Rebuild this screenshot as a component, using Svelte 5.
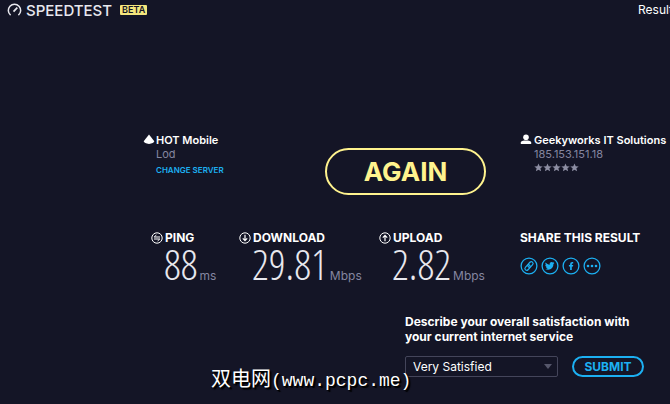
<script>
  const metrics = [
    { id: 'ping', label: 'Ping', value: '88', unit: 'ms' },
    { id: 'download', label: 'Download', value: '29.81', unit: 'Mbps' },
    { id: 'upload', label: 'Upload', value: '2.82', unit: 'Mbps' }
  ];
  const shares = ['link', 'twitter', 'facebook', 'more'];
  const stars = [1, 2, 3, 4, 5];
  const ratings = ['Very Satisfied', 'Satisfied', 'Neutral', 'Dissatisfied', 'Very Dissatisfied'];

  let rating = $state('Very Satisfied');
</script>

<div class="app">
  <header>
    <a class="logo" href="/">
      <svg width="15" height="14" viewBox="0 0 15 14" aria-hidden="true">
        <path d="M3.6 12.2A6.2 6.2 0 1 1 11.4 12.2" fill="none" stroke="currentColor" stroke-width="1.5" />
        <path d="M6.5 8.7L10.3 4.6" stroke="currentColor" stroke-width="1.7" />
      </svg>
      <span>SPEEDTEST</span>
    </a>
    <span class="beta">BETA</span>
    <nav><a href="/results">Results</a></nav>
  </header>

  <main>
    <section class="connection">
      <div class="party">
        <svg width="12" height="11" viewBox="0 0 12 11" aria-hidden="true">
          <path d="M6 0.5L11.3 7.3Q10.7 9.7 6 9.9Q1.3 9.7 0.7 7.3Z" fill="currentColor" />
        </svg>
        <div>
          <strong>HOT Mobile</strong>
          <span class="detail">Lod</span>
          <a class="change" href="/servers">CHANGE SERVER</a>
        </div>
      </div>

      <button class="again" type="button">AGAIN</button>

      <div class="party isp">
        <svg width="12" height="11" viewBox="0 0 12 11" aria-hidden="true">
          <circle cx="6" cy="3.3" r="2.8" fill="currentColor" />
          <path d="M0.8 10V8.6Q0.8 7 4.5 6.5H7.5Q11.2 7 11.2 8.6V10Z" fill="currentColor" />
        </svg>
        <div>
          <strong>Geekyworks IT Solutions</strong>
          <span class="detail">185.153.151.18</span>
          <div class="stars">
            {#each stars as star (star)}
              <svg width="9" height="9" viewBox="0 0 9 9" aria-hidden="true">
                <path d="M4.5 0.4L5.7 3.2L8.7 3.4L6.4 5.3L7.1 8.3L4.5 6.7L1.9 8.3L2.6 5.3L0.3 3.4L3.3 3.2Z" fill="currentColor" />
              </svg>
            {/each}
          </div>
        </div>
      </div>
    </section>

    <section class="results">
      {#each metrics as metric (metric.id)}
        <div class="metric">
          <h2>
            <svg width="12" height="12" viewBox="0 0 12 12" fill="none" stroke="currentColor" aria-hidden="true">
              <circle cx="6" cy="6" r="5.2" />
              {#if metric.id === 'ping'}
                <path d="M9 5H3.2L5.4 3M3 7H8.8L6.6 9" />
              {:else if metric.id === 'download'}
                <path d="M6 2.8V8.6M3.8 6.4L6 8.6L8.2 6.4" stroke-width="1.2" />
              {:else}
                <path d="M6 9.2V3.4M3.8 5.6L6 3.4L8.2 5.6" stroke-width="1.2" />
              {/if}
            </svg>
            {metric.label}
          </h2>
          <p><span class="value">{metric.value}</span><span class="unit">{metric.unit}</span></p>
        </div>
      {/each}

      <div class="share">
        <h2>Share this result</h2>
        <div class="links">
          {#each shares as share (share)}
            <a href="/share/{share}" aria-label={share}>
              <svg width="18" height="18" viewBox="0 0 18 18" aria-hidden="true">
                <circle cx="9" cy="9" r="7.9" fill="none" stroke="currentColor" stroke-width="1.3" />
                {#if share === 'link'}
                  <g transform="rotate(-48 9 9)" fill="none" stroke="currentColor" stroke-width="1.2">
                    <rect x="3.8" y="7.2" width="6.2" height="3.6" rx="1.8" />
                    <rect x="8" y="7.2" width="6.2" height="3.6" rx="1.8" />
                  </g>
                {:else if share === 'twitter'}
                  <path
                    d="M13.4 6.2L12.4 7.1C12.5 10.2 10.2 12.8 7.2 12.8C6 12.8 5 12.5 4.3 12C5.3 12.1 6.2 11.8 6.8 11.3C6 11.2 5.3 10.7 5 9.9L5.8 9.9C4.9 9.6 4.4 8.8 4.3 7.9L5.1 8.1C4.3 7.4 4.2 6.3 4.6 5.6C5.6 6.8 7.1 7.6 8.7 7.7C8.3 6 9.4 5 10.6 5C11.2 5 11.7 5.2 12 5.6L13.2 5.1L12.6 6.1Z"
                    fill="currentColor"
                  />
                {:else if share === 'facebook'}
                  <path d="M8.1 13V9.6H6.9V8H8.1V7Q8.1 4.9 10.2 4.9H11.2V6.4H10.5Q9.8 6.4 9.8 7.1V8H11.2L11 9.6H9.8V13Z" fill="currentColor" />
                {:else}
                  <circle cx="5" cy="9" r="1.3" fill="currentColor" />
                  <circle cx="9" cy="9" r="1.3" fill="currentColor" />
                  <circle cx="13" cy="9" r="1.3" fill="currentColor" />
                {/if}
              </svg>
            </a>
          {/each}
        </div>
      </div>
    </section>

    <form class="survey" onsubmit={(event) => event.preventDefault()}>
      <label for="rating">Describe your overall satisfaction with your current internet service</label>
      <div class="answer">
        <div class="select">
          <select id="rating" bind:value={rating}>
            {#each ratings as option (option)}
              <option>{option}</option>
            {/each}
          </select>
          <svg width="8" height="5" viewBox="0 0 8 5" aria-hidden="true"><path d="M0 0H8L4 5Z" fill="currentColor" /></svg>
        </div>
        <button class="submit" type="submit">SUBMIT</button>
      </div>
    </form>
  </main>

  <div class="watermark">双电网<span>(www.pcpc.me)</span></div>
</div>

<style>
  :global(body) {
    background: #141526;
  }

  .app {
    position: relative;
    min-height: 100vh;
    overflow: hidden;
    box-sizing: border-box;
    background: #141526;
    color: #fff;
    font-family: Inter, 'Liberation Sans', sans-serif;
    font-size: 12px;
  }

  h2,
  p {
    margin: 0;
  }

  a {
    color: inherit;
    text-decoration: none;
  }

  svg {
    display: block;
    flex: none;
  }

  button,
  select {
    font-family: inherit;
    cursor: pointer;
  }

  header {
    display: flex;
    align-items: center;
    height: 20px;
    padding-left: 7px;
  }

  .logo {
    display: flex;
    align-items: center;
    gap: 4px;
    color: #e8e8ee;
    font-size: 15px;
    font-weight: 500;
  }

  .beta {
    margin-left: 8px;
    padding: 0 2px;
    border-radius: 1px;
    background: #f5e67c;
    color: #141526;
    font-size: 9px;
    font-weight: 600;
    line-height: 10px;
  }

  nav {
    width: 32px;
    margin-left: auto;
    overflow: hidden;
    line-height: 16px;
  }

  main {
    padding: 113px 10px 0 143px;
  }

  .connection {
    display: grid;
    grid-template-columns: 182px 1fr 140px;
  }

  .party {
    display: flex;
    gap: 1px;
    min-width: 0;
    white-space: nowrap;
  }

  .isp {
    gap: 2px;
  }

  .party svg {
    margin-top: 1px;
  }

  strong,
  .detail,
  .change {
    display: block;
    line-height: 14px;
  }

  strong {
    font-size: 11px;
    font-weight: 600;
  }

  .detail {
    color: #8586a0;
    font-size: 11px;
  }

  .change {
    margin-top: 2px;
    color: #1cb0f2;
    font-size: 8px;
    font-weight: 600;
  }

  .stars {
    display: flex;
    color: #8d8ea3;
  }

  .stars svg {
    margin-top: 2px;
  }

  .again {
    justify-self: start;
    width: 161px;
    height: 47px;
    margin-top: 15px;
    padding: 0;
    border: 2px solid #fff38e;
    border-radius: 24px;
    background: none;
    color: #fff38e;
    font-size: 26px;
    font-weight: 700;
  }

  .results {
    display: grid;
    grid-template-columns: 88px 140px 1fr 140px;
    margin-top: 36px;
    padding-left: 8px;
  }

  h2 {
    display: flex;
    align-items: center;
    gap: 2px;
    font-size: 12px;
    line-height: 14px;
    text-transform: uppercase;
    white-space: nowrap;
  }

  .metric {
    color: #e8e8ee;
  }

  .metric h2 {
    color: #fff;
  }

  .metric p {
    display: flex;
    align-items: baseline;
    gap: 2px;
    height: 40px;
    padding-left: 13px;
    white-space: nowrap;
  }

  .value {
    font-family: 'Open Sans Condensed Light', 'Noto Sans ExtraCondensed Light', 'Roboto Condensed Light', 'Liberation Sans Narrow', sans-serif;
    font-size: 42px;
    font-weight: 300;
    line-height: 38px;
  }

  .unit {
    color: #8586a0;
    font-size: 12px;
  }

  .links {
    display: flex;
    gap: 3px;
    margin-top: 12px;
    color: #1cb0f2;
  }

  .survey {
    width: 240px;
    margin: 29px 0 0 262px;
  }

  .survey label {
    display: block;
    font-weight: 700;
    line-height: 15px;
  }

  .answer {
    display: flex;
    gap: 14px;
    margin-top: 12px;
  }

  .select {
    position: relative;
    width: 153px;
  }

  .select select {
    appearance: none;
    width: 100%;
    height: 21px;
    padding: 0 7px;
    border: 1px solid #44455a;
    border-radius: 2px;
    background: none;
    color: #fff;
    font-size: 12px;
  }

  .select svg {
    position: absolute;
    top: 8px;
    right: 6px;
    color: #56576b;
    pointer-events: none;
  }

  .submit {
    width: 72px;
    height: 21px;
    padding: 0;
    border: 2px solid #1cb0f2;
    border-radius: 11px;
    background: none;
    color: #1cb0f2;
    font-size: 12px;
    font-weight: 700;
    line-height: 16px;
  }

  .watermark {
    position: absolute;
    bottom: 8px;
    left: 211px;
    font-family: 'Noto Sans CJK SC', sans-serif;
    font-size: 20px;
    line-height: 30px;
    white-space: nowrap;
    text-shadow: 1px 1px 1px #000, 2px 2px 1px #000;
    pointer-events: none;
  }

  .watermark span {
    font-family: 'Liberation Mono', monospace;
    font-size: 18px;
  }
</style>
